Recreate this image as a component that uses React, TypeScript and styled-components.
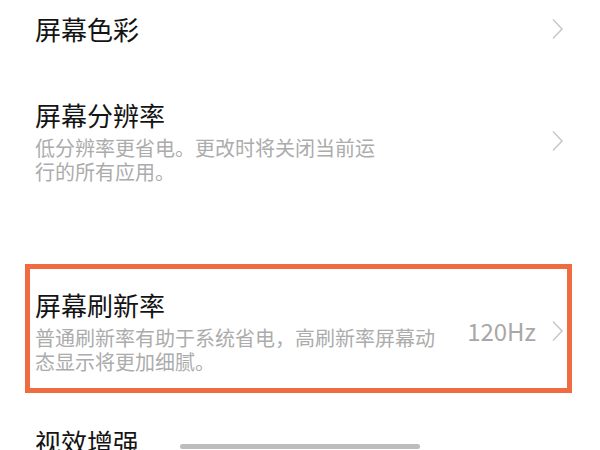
import React from "react";
import styled, { createGlobalStyle } from "styled-components";

const GlobalStyle = createGlobalStyle`
  html, body {
    margin: 0;
    padding: 0;
    background: #ffffff;
    overflow: hidden;
  }
  body {
    font-family: "Noto Sans CJK SC", "Noto Sans", sans-serif;
  }
`;

const Page = styled.div`
  width: 600px;
  height: 450px;
  box-sizing: border-box;
  padding: 0 33px 0 30px;
  overflow: hidden;
  background: #ffffff;
`;

const Row = styled.div<{ $highlighted?: boolean; $groupStart?: boolean }>`
  display: flex;
  align-items: center;
  padding: ${({ $highlighted }) => ($highlighted ? "19px 3px 14px 5px" : "26px 3px 26px 5px")};
  margin-top: ${({ $highlighted, $groupStart }) =>
    $highlighted ? "59px" : $groupStart ? "11px" : "0"};
  outline: ${({ $highlighted }) => ($highlighted ? "5px solid #f06b40" : "none")};

  &:first-child {
    padding-top: 12px;
  }
`;

const TextBlock = styled.div<{ $maxWidth?: number }>`
  flex: 1;
  min-width: 0;
  max-width: ${({ $maxWidth }) => ($maxWidth ? `${$maxWidth}px` : "none")};
  margin-right: auto;
`;

const Title = styled.div`
  font-size: 26px;
  line-height: 34px;
  color: #141414;
`;

const Subtitle = styled.div`
  margin-top: 4px;
  font-size: 20px;
  line-height: 24px;
  color: #acacac;
`;

const Value = styled.span`
  margin-left: 24px;
  font-size: 24px;
  line-height: 30px;
  color: #a8a8a8;
  white-space: nowrap;
`;

const Chevron = styled.svg`
  flex: none;
  width: 13px;
  height: 22px;
  margin-left: 15px;
`;

const HomeBar = styled.div`
  position: fixed;
  left: 50%;
  bottom: 1px;
  width: 240px;
  height: 5px;
  margin-left: -120px;
  border-radius: 3px;
  background: #bdbdbd;
`;

interface ItemProps {
  title: string;
  desc?: string;
  value?: string;
  textWidth?: number;
  highlighted?: boolean;
  groupStart?: boolean;
  arrow?: boolean;
}

function Arrow() {
  return (
    <Chevron viewBox="0 0 13 22">
      <path d="M2 1.5 L11 11 L2 20.5" fill="none" stroke="#c9c9c9" strokeWidth="1.6" />
    </Chevron>
  );
}

function SettingItem({ title, desc, value, textWidth, highlighted, groupStart, arrow = true }: ItemProps) {
  return (
    <Row $highlighted={highlighted} $groupStart={groupStart}>
      <TextBlock $maxWidth={textWidth}>
        <Title>{title}</Title>
        {desc && <Subtitle>{desc}</Subtitle>}
      </TextBlock>
      {value && <Value>{value}</Value>}
      {arrow && <Arrow />}
    </Row>
  );
}

export default function App() {
  return (
    <>
      <GlobalStyle />
      <Page>
        <SettingItem title="屏幕色彩" />
        <SettingItem
          title="屏幕分辨率"
          desc="低分辨率更省电。更改时将关闭当前运行的所有应用。"
          textWidth={350}
        />
        <SettingItem
          title="屏幕刷新率"
          desc="普通刷新率有助于系统省电，高刷新率屏幕动态显示将更加细腻。"
          value="120Hz"
          highlighted
        />
        {/* the last row runs past the bottom of the screen, as in the capture */}
        <SettingItem title="视效增强" groupStart arrow={false} />
      </Page>
      <HomeBar />
    </>
  );
}
